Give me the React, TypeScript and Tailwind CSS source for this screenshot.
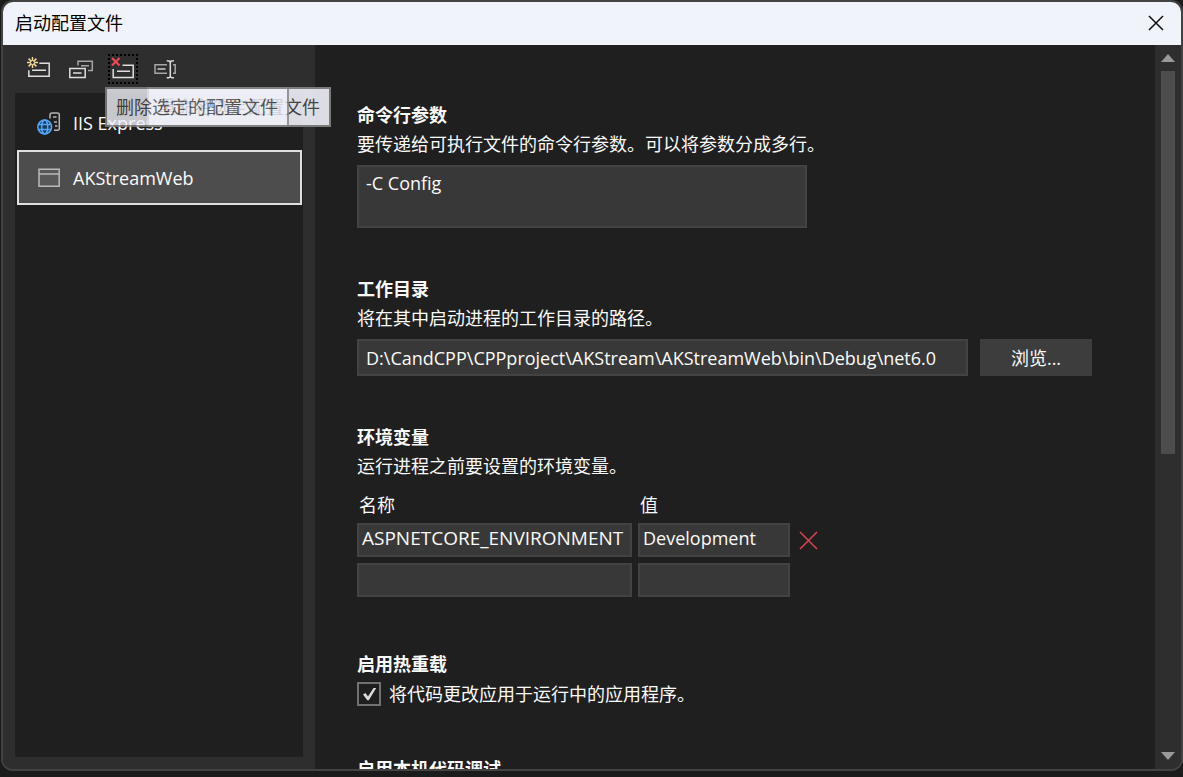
import { useState, type ReactNode } from "react";
import clsx from "clsx";

interface Profile {
  id: string;
  label: string;
  icon: ReactNode;
}

interface EnvRow {
  name: string;
  value: string;
}

const FIELD = "border-2 border-[#434343] bg-[#383838] text-[#fafafa] outline-none";

function NewIcon() {
  return (
    <svg width="24" height="24" viewBox="0 0 24 24" fill="none" strokeWidth="1.5">
      <path d="M12.3 6.2h9.9v13H1.8v-6" stroke="#dedede" />
      <path d="M5 13.2h14" stroke="#dedede" />
      <path
        d="M5.5 0v3.600M5.500 7.400V11M0 5.500h3.600M7.400 5.500H11M1.600 1.600l2.600 2.600M6.800 6.800l2.600 2.600M9.400 1.600L6.800 4.200M4.200 6.800L1.600 9.400"
        stroke="#f5dc9c"
      />
      <circle cx="5.500" cy="5.500" r="2" stroke="#f5dc9c" strokeWidth="1" />
    </svg>
  );
}

function CopyIcon() {
  return (
    <svg width="26" height="24" viewBox="0 0 26 24" fill="none" strokeWidth="1.5">
      <path d="M10 8.500V4.200h14.300v9.300H20" stroke="#a6a6a6" />
      <path d="M13 8.700h8" stroke="#a6a6a6" />
      <path d="M1.800 11.500h15.400v9H1.800zM5 16h8.500" stroke="#dedede" />
    </svg>
  );
}

function DeleteIcon() {
  return (
    <svg width="24" height="24" viewBox="0 0 24 24" fill="none" strokeWidth="1.5">
      <path d="M11.500 8.200h10.700v12.300H2.200v-8.500" stroke="#dedede" />
      <path d="M6 14.300h13" stroke="#dedede" />
      <path d="M1 1l7.500 7.500M8.500 1L1 8.500" stroke="#f04a58" strokeWidth="2" />
    </svg>
  );
}

function RenameIcon() {
  return (
    <svg width="24" height="24" viewBox="0 0 24 24" fill="none" strokeWidth="1.500">
      <path d="M14 7.800H2v8.500h12M20 7.800h2.200v8.500H20" stroke="#a6a6a6" />
      <path d="M4.500 12h8" stroke="#a6a6a6" strokeWidth="2" />
      <path
        d="M13.700 3.800c2.200 0 3.600.4 3.600 1.600 0-1.200 1.400-1.600 3.600-1.600M17.300 5v15M13.700 20.800c2.200 0 3.600-.4 3.600-1.600 0 1.200 1.400 1.600 3.600 1.600"
        stroke="#dedede"
      />
    </svg>
  );
}

function ServerIcon() {
  return (
    <svg width="24" height="24" viewBox="0 0 24 24" fill="none">
      <path
        d="M13 7.500V4q0-2 2-2h5.300q2 0 2 2v13.300q0 2-2 2H17M16 6h3.500M17 11h3M18 15h2.500"
        stroke="#b4b4b4"
        strokeWidth="1.500"
      />
      <g stroke="#55a6f7" strokeWidth="1.500">
        <circle cx="7.700" cy="16" r="6.900" fill="#1d3856" />
        <ellipse cx="7.700" cy="16" rx="3" ry="6.900" />
        <path d="M1.300 13.500h12.800M1.300 18.500h12.800" />
      </g>
    </svg>
  );
}

function WindowIcon() {
  return (
    <svg width="24" height="24" viewBox="0 0 24 24" fill="none" strokeWidth="1.500">
      <path d="M2 3.300h20.200v16.900H2z" fill="#585858" stroke="#bababa" />
      <path d="M2 8h20" stroke="#bababa" />
    </svg>
  );
}

const PROFILES: Profile[] = [
  { id: "iis", label: "IIS Express", icon: <ServerIcon /> },
  { id: "akstream", label: "AKStreamWeb", icon: <WindowIcon /> },
];

const TOOLS = [
  { id: "new", label: "新建配置文件", icon: <NewIcon /> },
  { id: "copy", label: "复制选定的配置文件", icon: <CopyIcon /> },
  { id: "delete", label: "删除选定的配置文件", icon: <DeleteIcon /> },
  { id: "rename", label: "重命名选定配置文件", icon: <RenameIcon /> },
];

function Section({ title, hint, children }: { title: string; hint?: string; children?: ReactNode }) {
  return (
    <section>
      <h2 className="text-lg leading-6 font-bold">{title}</h2>
      {hint && <p className="mt-1 mb-2 leading-[26px]">{hint}</p>}
      {children}
    </section>
  );
}

export default function App() {
  const [selected, setSelected] = useState("akstream");
  const [hotReload, setHotReload] = useState(true);
  const [args, setArgs] = useState("-C Config");
  const [dir, setDir] = useState("D:\\CandCPP\\CPPproject\\AKStream\\AKStreamWeb\\bin\\Debug\\net6.0");
  const [env, setEnv] = useState<EnvRow[]>([
    { name: "ASPNETCORE_ENVIRONMENT", value: "Development" },
    { name: "", value: "" },
  ]);

  function editEnv(index: number, patch: Partial<EnvRow>) {
    setEnv((rows) => rows.map((r, i) => (i === index ? { ...r, ...patch } : r)));
  }

  return (
    <div className="h-screen overflow-hidden bg-[#1b1b1b] pb-1.5 pl-px font-['Open_Sans','Noto_Sans_CJK_SC',sans-serif] text-lg text-[#fafafa]">
      <div className="flex h-full flex-col overflow-hidden rounded-xl border-2 border-[#434343] bg-[#1f1f1f]">
        <header className="flex h-[43px] shrink-0 items-center justify-between bg-[#f0f3f9] pr-4 pb-0.5 pl-3 text-black">
          <h1>启动配置文件</h1>
          <button aria-label="关闭">
            <svg width="18" height="18" viewBox="0 0 18 18" fill="none" stroke="#111" strokeWidth="1.500">
              <path d="M2 2l14 14M16 2L2 16" />
            </svg>
          </button>
        </header>

        <div className="flex min-h-0 flex-1">
          <aside className="flex w-[312px] shrink-0 flex-col bg-[#2e2e2e] px-3 pb-3">
            <div className="relative flex h-12 items-center gap-3 pl-[9px]" role="toolbar">
              {TOOLS.map((t) => (
                <button
                  key={t.id}
                  aria-label={t.label}
                  className={clsx(
                    "flex size-[30px] items-center justify-center",
                    t.id === "delete" && "border-2 border-dotted border-black"
                  )}
                >
                  {t.icon}
                </button>
              ))}

              <div className="absolute top-[42px] left-[132px] z-10 border-2 border-[#848484] bg-[#f1f2fa] px-[9px] py-1 leading-7 whitespace-nowrap text-[#484848] opacity-90">
                重命名选定配置文件
              </div>
              <div
                className="absolute top-[42px] left-[90px] z-10 border-2 border-[#848484] bg-[#f1f2fa] px-[9px] py-1 leading-7 whitespace-nowrap text-[#484848] opacity-80"
                role="tooltip"
              >
                删除选定的配置文件
              </div>
            </div>

            <ul className="flex-1 bg-[#1f1f1f] pt-0.5 pr-px pl-0.5">
              {PROFILES.map((p) => (
                <li key={p.id}>
                  <button
                    onClick={() => setSelected(p.id)}
                    className={clsx(
                      "flex h-[55px] w-full items-center gap-3 border-2 pl-[18px] text-left",
                      selected === p.id ? "border-[#e0e0e0] bg-[#4d4d4d]" : "border-transparent"
                    )}
                  >
                    {p.icon}
                    {p.label}
                  </button>
                </li>
              ))}
            </ul>
          </aside>

          <main className="flex min-w-0 flex-1 flex-col gap-[49px] overflow-hidden pt-[58px] pr-[63px] pl-[42px]">
            <Section title="命令行参数" hint="要传递给可执行文件的命令行参数。可以将参数分成多行。">
              <textarea
                aria-label="命令行参数"
                value={args}
                onChange={(e) => setArgs(e.target.value)}
                className={clsx("block h-[63px] w-[450px] resize-none px-[7px] py-0.5 leading-7", FIELD)}
              />
            </Section>

            <Section title="工作目录" hint="将在其中启动进程的工作目录的路径。">
              <div className="flex gap-3">
                <input
                  aria-label="工作目录"
                  value={dir}
                  onChange={(e) => setDir(e.target.value)}
                  className={clsx("h-[37px] min-w-0 flex-1 px-[7px]", FIELD)}
                />
                <button className="w-28 bg-[#3d3d3d]">浏览...</button>
              </div>
            </Section>

            <Section title="环境变量" hint="运行进程之前要设置的环境变量。">
              <table className="border-separate border-spacing-0">
                <thead>
                  <tr className="h-9 text-left">
                    <th className="pl-0.5 font-normal">名称</th>
                    <th className="pl-0.5 font-normal">值</th>
                    <th />
                  </tr>
                </thead>
                <tbody>
                  {env.map((row, i) => (
                    <tr key={i}>
                      <td className="pr-1.5 pb-1.5">
                        <input
                          aria-label="名称"
                          value={row.name}
                          onChange={(e) => editEnv(i, { name: e.target.value })}
                          className={clsx("block h-[34px] w-[275px] px-[3px] pb-1 text-[19px]", FIELD)}
                        />
                      </td>
                      <td className="pr-2 pb-1.5">
                        <input
                          aria-label="值"
                          value={row.value}
                          onChange={(e) => editEnv(i, { value: e.target.value })}
                          className={clsx("block h-[34px] w-[152px] px-[3px] pb-1", FIELD)}
                        />
                      </td>
                      <td className="pb-1.5">
                        {row.name && (
                          <button
                            aria-label="删除变量"
                            className="block"
                            onClick={() => setEnv((rows) => rows.filter((_, j) => j !== i))}
                          >
                            <svg width="20" height="20" viewBox="0 0 20 20" fill="none" stroke="#e04350" strokeWidth="1.500">
                              <path d="M2 2l17 17M19 2L2 19" />
                            </svg>
                          </button>
                        )}
                      </td>
                    </tr>
                  ))}
                </tbody>
              </table>
            </Section>

            <Section title="启用热重载">
              <label className="mt-1 flex items-center gap-2">
                <span className="relative flex">
                  <input
                    type="checkbox"
                    checked={hotReload}
                    onChange={(e) => setHotReload(e.target.checked)}
                    className="size-6 appearance-none border-2 border-[#717171]"
                  />
                  {hotReload && (
                    <svg className="pointer-events-none absolute inset-0" width="24" height="24" viewBox="0 0 24 24">
                      <path d="M6 12.500l2.500-1.500 2.500 3.500L16.500 6H19.200L11.800 18.200H10.300z" fill="#dcdcdc" />
                    </svg>
                  )}
                </span>
                将代码更改应用于运行中的应用程序。
              </label>
            </Section>

            <Section title="启用本机代码调试" />
          </main>

          <div className="flex w-[26px] shrink-0 flex-col items-center bg-[#2e2e2e] py-2" aria-hidden="true">
            <svg width="14" height="10" viewBox="0 0 14 10">
              <path d="M0 9L7 1l7 8z" fill="#999" />
            </svg>
            <div className="my-2 min-h-0 w-3.5 flex-1">
              <div className="h-[57%] bg-[#4d4d4d]" />
            </div>
            <svg width="14" height="10" viewBox="0 0 14 10">
              <path d="M0 1l7 8 7-8z" fill="#999" />
            </svg>
          </div>
        </div>
      </div>
    </div>
  );
}
